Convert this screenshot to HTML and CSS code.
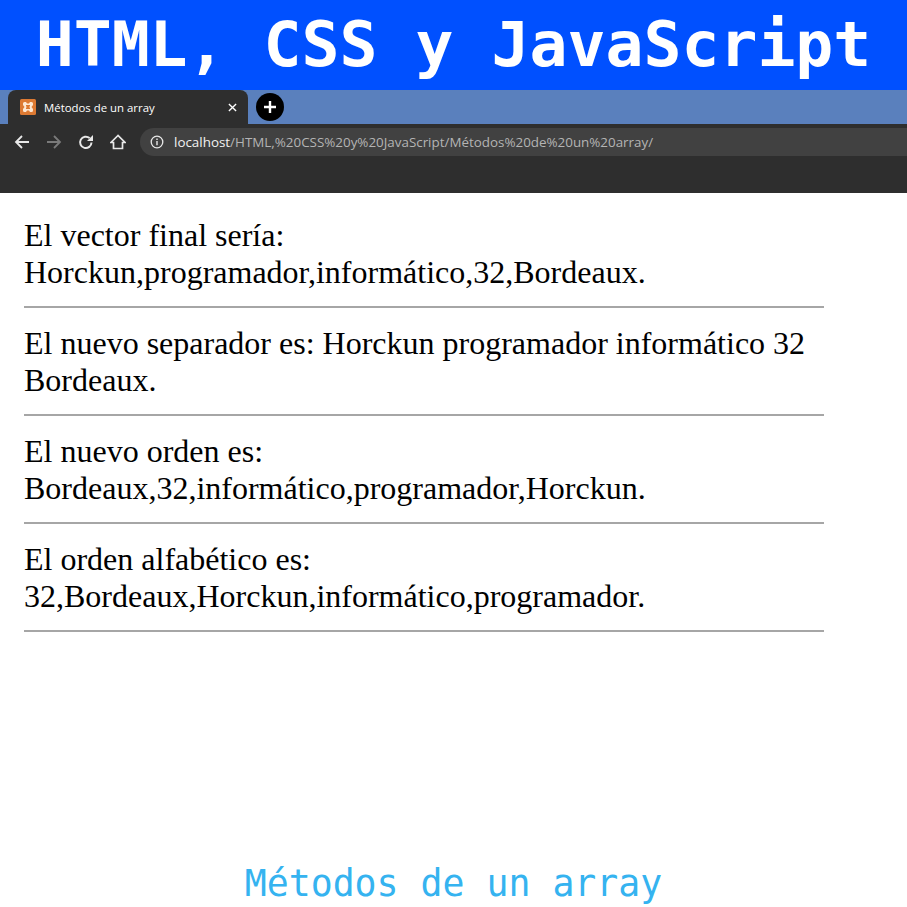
FILE: index.html
```html
<!DOCTYPE html>
<html lang="es">

<head>
    <meta charset="UTF-8">
    <title>Métodos de un array</title>
    <link rel="stylesheet" href="styles.css">
</head>

<body>
    <header class="banner">HTML, CSS y JavaScript</header>

    <div class="browser">
        <div class="tabstrip">
            <div class="tab">
                <svg class="favicon" viewBox="0 0 16 16">
                    <rect width="16" height="16" rx="1.500" fill="#dd7a33"/>
                    <path d="M3 4.500a1.500 1.500 0 0 1 1.500-1.500h1.500l1 1.500h2l1-1.500h1.500a1.500 1.500 0 0 1 1.500 1.500v1.500l-1.500 2 1.500 2v1.500a1.500 1.500 0 0 1-1.500 1.500h-1.500l-1-1.500h-2l-1 1.500h-1.500a1.500 1.500 0 0 1-1.500-1.500v-1.500l1.500-2-1.500-2z" fill="#fde8d3"/>
                    <path d="M6 6h4v1.300l-1 .7 1 .7V10H6V8.700l1-.7-1-.7z" fill="#dd7a33"/>
                </svg>
                <span class="tab-title">Métodos de un array</span>
                <svg class="tab-close" viewBox="0 0 10 10">
                    <path d="M1 1l8 8M9 1l-8 8" stroke="#fff" stroke-width="1.500"/>
                </svg>
            </div>
            <div class="new-tab">
                <svg viewBox="0 0 14 14" width="14" height="14">
                    <path d="M7 1v12M1 7h12" stroke="#fff" stroke-width="2.400"/>
                </svg>
            </div>
        </div>
        <div class="toolbar">
            <svg class="nav-icon" viewBox="0 0 16 16">
                <path d="M15 8H2M8 2L2 8l6 6" fill="none" stroke="#e8e8e8" stroke-width="1.800"/>
            </svg>
            <svg class="nav-icon" viewBox="0 0 16 16">
                <path d="M1 8h13M8 2l6 6-6 6" fill="none" stroke="#7a7a7a" stroke-width="1.800"/>
            </svg>
            <svg class="nav-icon" viewBox="0 0 16 16">
                <path d="M13.500 8.500a5.700 5.700 0 1 1-1.900-4.400" fill="none" stroke="#e8e8e8" stroke-width="2"/>
                <path d="M15 1v6h-6z" fill="#e8e8e8"/>
            </svg>
            <svg class="nav-icon" viewBox="0 0 16 16">
                <path d="M8 1.500L1 8.500h2.500v6h9v-6H15z" fill="none" stroke="#e8e8e8" stroke-width="1.700"/>
            </svg>
            <div class="omnibox">
                <svg class="info" viewBox="0 0 14 14">
                    <circle cx="7" cy="7" r="5.800" fill="none" stroke="#e8e8e8" stroke-width="1.300"/>
                    <path d="M7 6v4.200M7 3.600v1.400" stroke="#e8e8e8" stroke-width="1.400"/>
                </svg>
                <span class="url"><b>localhost</b>/HTML,%20CSS%20y%20JavaScript/Métodos%20de%20un%20array/</span>
            </div>
        </div>
        <div class="bookmarks"></div>
    </div>

    <main class="content">
        <p>El vector final sería:<br>Horckun,programador,informático,32,Bordeaux.</p>
        <hr>
        <p>El nuevo separador es: Horckun programador informático 32 Bordeaux.</p>
        <hr>
        <p>El nuevo orden es:<br>Bordeaux,32,informático,programador,Horckun.</p>
        <hr>
        <p>El orden alfabético es:<br>32,Bordeaux,Horckun,informático,programador.</p>
        <hr>
    </main>

    <footer class="caption">Métodos de un array</footer>
</body>

</html>
```

FILE: styles.css
```css
* {
    box-sizing: border-box;
}

html, body {
    margin: 0;
    height: 907px;
    overflow: hidden;
}

body {
    display: flex;
    flex-direction: column;
    background: #fff;
}

.banner {
    height: 90px;
    background: #0050ff;
    color: #fff;
    font-family: "DejaVu Sans Mono", monospace;
    font-weight: bold;
    font-size: 63.100px;
    line-height: 88px;
    text-align: center;
    white-space: nowrap;
}

.browser {
    height: 103px;
    background: #2e2e2e;
    font-family: "Open Sans", "Noto Sans", sans-serif;
}

.tabstrip {
    height: 34px;
    background: #5a80bd;
    display: flex;
    align-items: flex-end;
    padding-left: 8px;
}

.tab {
    width: 240px;
    height: 34px;
    background: #2e2e2e;
    border-radius: 8px 8px 0 0;
    display: flex;
    align-items: center;
    padding: 0 11px 0 12px;
    color: #fff;
    font-size: 11.400px;
}

.favicon {
    width: 16px;
    height: 16px;
    margin-right: 8px;
}

.tab-title {
    flex: 1;
}

.tab-close {
    width: 9px;
    height: 9px;
}

.new-tab {
    width: 28px;
    height: 28px;
    margin: 0 0 3px 8px;
    border-radius: 50%;
    background: #000;
    display: flex;
    align-items: center;
    justify-content: center;
}

.toolbar {
    height: 36px;
    display: flex;
    align-items: center;
    padding: 0 0 0 14px;
}

.nav-icon {
    width: 16px;
    height: 16px;
    margin-right: 16px;
    flex: none;
}

.omnibox {
    flex: 1;
    height: 28px;
    margin-left: -2px;
    background: #414141;
    border-radius: 14px 0 0 14px;
    display: flex;
    align-items: center;
    padding-left: 10px;
    font-size: 13.400px;
    color: #b4b4b4;
    white-space: nowrap;
}

.info {
    width: 14px;
    height: 14px;
    margin-right: 10px;
}

.url b {
    font-weight: normal;
    color: #f2f2f2;
}

.content {
    width: 824px;
    padding: 24px 0 0 24px;
    flex: 1;
    font-family: "Liberation Serif", serif;
    font-size: 32px;
    line-height: 37px;
    color: #000;
}

.content p {
    margin: 0;
}

.content hr {
    margin: 15px 0 17px;
    height: 2px;
    border: none;
    background: #a6a6a6;
}

.caption {
    height: 54px;
    padding-top: 11px;
    color: #35b3f0;
    font-family: "DejaVu Sans Mono", monospace;
    font-size: 36.500px;
    line-height: 40px;
    text-align: center;
    white-space: nowrap;
}
```
